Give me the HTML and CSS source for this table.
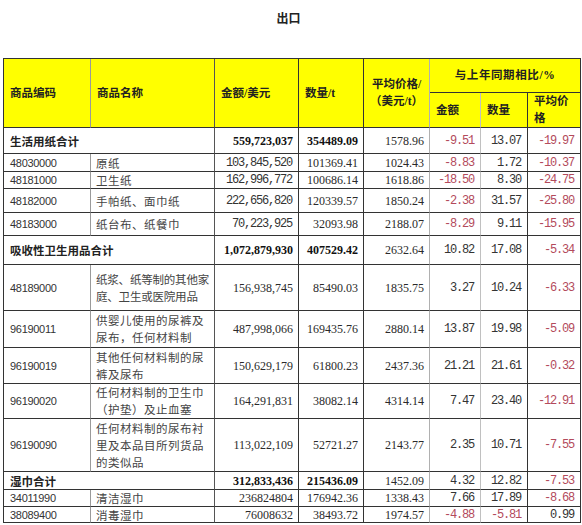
FILE: index.html
```html
<!DOCTYPE html>
<html lang="zh-CN">
<head>
<meta charset="utf-8">
<title>出口</title>
<link rel="stylesheet" href="styles.css">
</head>
<body>
<div class="page">
  <div class="title">出口</div>
  <table class="tbl">
    <colgroup>
      <col class="w1"><col class="w2"><col class="w3"><col class="w4"><col class="w5"><col class="w6"><col class="w7"><col class="w8">
    </colgroup>
    <thead>
      <tr class="h34">
        <th rowspan="2" class="c1 hl">商品编码</th>
        <th rowspan="2" class="c2 hl">商品名称</th>
        <th rowspan="2" class="c3 hl">金额/美元</th>
        <th rowspan="2" class="c4 hl">数量/t</th>
        <th rowspan="2" class="c5 hc">平均价格/<br>（美元/t）</th>
        <th colspan="3" class="c8 hc spaced">与上年同期相比/%</th>
      </tr>
      <tr class="h35">
        <th class="c6 hl">金额</th>
        <th class="c7 hl">数量</th>
        <th class="c8 hl">平均价<br>格</th>
      </tr>
    </thead>
    <tbody>
      <tr class="h26">
        <td colspan="2" class="c2 sum">生活用纸合计</td>
        <td class="c3 num b">559,723,037</td>
        <td class="c4 num b">354489.09</td>
        <td class="c5 num">1578.96</td>
        <td class="c6 mono neg">-9.51</td>
        <td class="c7 mono">13.07</td>
        <td class="c8 mono neg">-19.97</td>
      </tr>
      <tr class="h18">
        <td class="c1 code">48030000</td>
        <td class="c2 name">原纸</td>
        <td class="c3 mono">103,845,520</td>
        <td class="c4 num">101369.41</td>
        <td class="c5 num">1024.43</td>
        <td class="c6 mono neg">-8.83</td>
        <td class="c7 mono">1.72</td>
        <td class="c8 mono neg">-10.37</td>
      </tr>
      <tr class="h17">
        <td class="c1 code">48181000</td>
        <td class="c2 name">卫生纸</td>
        <td class="c3 mono">162,996,772</td>
        <td class="c4 num">100686.14</td>
        <td class="c5 num">1618.86</td>
        <td class="c6 mono neg">-18.50</td>
        <td class="c7 mono">8.30</td>
        <td class="c8 mono neg">-24.75</td>
      </tr>
      <tr class="h24">
        <td class="c1 code">48182000</td>
        <td class="c2 name">手帕纸、面巾纸</td>
        <td class="c3 mono">222,656,820</td>
        <td class="c4 num">120339.57</td>
        <td class="c5 num">1850.24</td>
        <td class="c6 mono neg">-2.38</td>
        <td class="c7 mono">31.57</td>
        <td class="c8 mono neg">-25.80</td>
      </tr>
      <tr class="h23">
        <td class="c1 code">48183000</td>
        <td class="c2 name">纸台布、纸餐巾</td>
        <td class="c3 mono">70,223,925</td>
        <td class="c4 num">32093.98</td>
        <td class="c5 num">2188.07</td>
        <td class="c6 mono neg">-8.29</td>
        <td class="c7 mono">9.11</td>
        <td class="c8 mono neg">-15.95</td>
      </tr>
      <tr class="h29">
        <td colspan="2" class="c2 sum">吸收性卫生用品合计</td>
        <td class="c3 num b">1,072,879,930</td>
        <td class="c4 num b">407529.42</td>
        <td class="c5 num">2632.64</td>
        <td class="c6 mono">10.82</td>
        <td class="c7 mono">17.08</td>
        <td class="c8 mono neg">-5.34</td>
      </tr>
      <tr class="h46">
        <td class="c1 code">48189000</td>
        <td class="c2 name ml tight">纸浆、纸等制的其他家<br>庭、卫生或医院用品</td>
        <td class="c3 num">156,938,745</td>
        <td class="c4 num">85490.03</td>
        <td class="c5 num">1835.75</td>
        <td class="c6 mono">3.27</td>
        <td class="c7 mono">10.24</td>
        <td class="c8 mono neg">-6.33</td>
      </tr>
      <tr class="h37">
        <td class="c1 code">96190011</td>
        <td class="c2 name ml">供婴儿使用的尿裤及<br>尿布，任何材料制</td>
        <td class="c3 num">487,998,066</td>
        <td class="c4 num">169435.76</td>
        <td class="c5 num">2880.14</td>
        <td class="c6 mono">13.87</td>
        <td class="c7 mono">19.98</td>
        <td class="c8 mono neg">-5.09</td>
      </tr>
      <tr class="h36">
        <td class="c1 code">96190019</td>
        <td class="c2 name ml">其他任何材料制的尿<br>裤及尿布</td>
        <td class="c3 num">150,629,179</td>
        <td class="c4 num">61800.23</td>
        <td class="c5 num">2437.36</td>
        <td class="c6 mono">21.21</td>
        <td class="c7 mono">21.61</td>
        <td class="c8 mono neg">-0.32</td>
      </tr>
      <tr class="h33">
        <td class="c1 code">96190020</td>
        <td class="c2 name ml">任何材料制的卫生巾<br>（护垫）及止血塞</td>
        <td class="c3 num">164,291,831</td>
        <td class="c4 num">38082.14</td>
        <td class="c5 num">4314.14</td>
        <td class="c6 mono">7.47</td>
        <td class="c7 mono">23.40</td>
        <td class="c8 mono neg">-12.91</td>
      </tr>
      <tr class="h53">
        <td class="c1 code">96190090</td>
        <td class="c2 name ml">任何材料制的尿布衬<br>里及本品目所列货品<br>的类似品</td>
        <td class="c3 num">113,022,109</td>
        <td class="c4 num">52721.27</td>
        <td class="c5 num">2143.77</td>
        <td class="c6 mono">2.35</td>
        <td class="c7 mono">10.71</td>
        <td class="c8 mono neg">-7.55</td>
      </tr>
      <tr class="h18">
        <td colspan="2" class="c2 sum">湿巾合计</td>
        <td class="c3 num b">312,833,436</td>
        <td class="c4 num b">215436.09</td>
        <td class="c5 num">1452.09</td>
        <td class="c6 mono">4.32</td>
        <td class="c7 mono">12.82</td>
        <td class="c8 mono neg">-7.53</td>
      </tr>
      <tr class="h17">
        <td class="c1 code">34011990</td>
        <td class="c2 name">清洁湿巾</td>
        <td class="c3 num">236824804</td>
        <td class="c4 num">176942.36</td>
        <td class="c5 num">1338.43</td>
        <td class="c6 mono">7.66</td>
        <td class="c7 mono">17.89</td>
        <td class="c8 mono neg">-8.68</td>
      </tr>
      <tr class="h16">
        <td class="c1 code">38089400</td>
        <td class="c2 name">消毒湿巾</td>
        <td class="c3 num">76008632</td>
        <td class="c4 num">38493.72</td>
        <td class="c5 num">1974.57</td>
        <td class="c6 mono neg">-4.88</td>
        <td class="c7 mono neg">-5.81</td>
        <td class="c8 mono">0.99</td>
      </tr>
    </tbody>
  </table>
</div>
</body>
</html>
```

FILE: styles.css
```css
html, body {
  margin: 0;
  padding: 0;
  background: #ffffff;
}

.page {
  width: 582px;
  color: #2a2a2a;
  font-family: "Liberation Serif", "Noto Sans CJK SC", serif;
}

.title {
  height: 36px;
  line-height: 36px;
  margin-bottom: 22px;
  padding-right: 5px;
  text-align: center;
  font-family: "Noto Sans CJK SC", sans-serif;
  font-size: 12px;
  font-weight: 700;
  color: #222;
}

.tbl {
  margin-left: 3px;
  width: 578px;
  table-layout: fixed;
  border-collapse: separate;
  border-spacing: 0;
  border-top: 1px solid #333;
  border-left: 1px solid #333;
}

.w1 { width: 87px; }
.w2 { width: 124px; }
.w3 { width: 84px; }
.w4 { width: 65px; }
.w5 { width: 66px; }
.w6 { width: 51px; }
.w7 { width: 47px; }
.w8 { width: 53px; }

.tbl th,
.tbl td {
  box-sizing: border-box;
  padding: 0;
  border-right: 1px solid #333;
  border-bottom: 1px solid #333;
  vertical-align: middle;
  white-space: nowrap;
  overflow: visible;
}

.tbl .c1 { border-right-color: #9a9a9a; }
.tbl .c2 { border-right-color: #555; }
.tbl .c5 { border-right-color: #b0b0b0; }
.tbl .c6 { border-right-color: #c0c0c0; }

.h16 { height: 16px; }
.h17 { height: 17px; }
.h18 { height: 18px; }
.h23 { height: 23px; }
.h24 { height: 24px; }
.h26 { height: 26px; }
.h29 { height: 29px; }
.h33 { height: 33px; }
.h34 { height: 34px; }
.h35 { height: 35px; }
.h36 { height: 36px; }
.h37 { height: 37px; }
.h46 { height: 46px; }
.h53 { height: 53px; }

.tbl th {
  background: #ffff00;
  font-family: "Liberation Serif", "Noto Sans CJK SC", serif;
  font-size: 11.5px;
  font-weight: 700;
  line-height: 17px;
  color: #222;
}

.tbl .hl {
  text-align: left;
  padding-left: 6px;
}

.tbl .hc {
  text-align: center;
}

.tbl .spaced {
  letter-spacing: 0.6px;
}

.tbl td {
  font-size: 12px;
  line-height: 14px;
}

.tbl .sum {
  padding-left: 6px;
  font-family: "Noto Sans CJK SC", sans-serif;
  font-size: 11.5px;
  font-weight: 700;
  color: #222;
}

.tbl .code {
  padding-left: 6px;
  font-family: "Liberation Sans", sans-serif;
  font-size: 11px;
  letter-spacing: -0.3px;
  color: #333;
}

.tbl .name {
  padding-left: 5px;
  font-family: "Noto Sans CJK SC", sans-serif;
  font-size: 11.5px;
  letter-spacing: 0.5px;
  color: #444;
}

.tbl .ml {
  line-height: 17px;
}

.tbl .tight {
  letter-spacing: -0.2px;
}

.tbl .num {
  text-align: right;
  padding-right: 5px;
  font-family: "Liberation Serif", serif;
  font-size: 12px;
  color: #2a2a2a;
}

.tbl .b {
  font-weight: 700;
  color: #111;
}

.tbl .mono {
  text-align: right;
  padding-right: 6px;
  font-family: "Liberation Mono", monospace;
  font-size: 12px;
  letter-spacing: -1.2px;
  color: #333;
}

.tbl .neg {
  color: #b34a5c;
}
```
